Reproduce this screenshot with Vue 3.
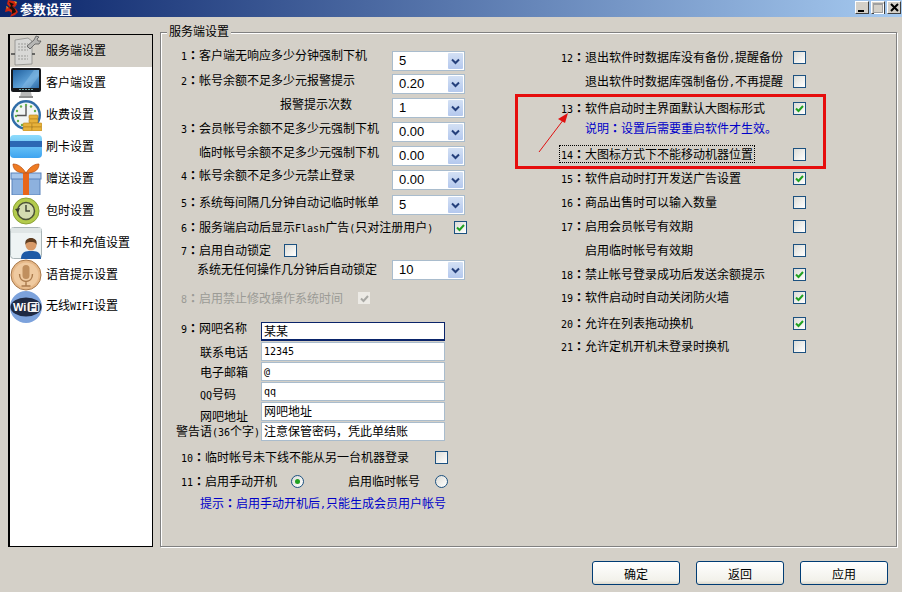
<template>
  <div class="window">
    <div class="titlebar">
      <svg class="logo" width="13" height="17" viewBox="0 0 13 17">
        <path d="M3 0l6 1 3 3-2 3-3-1 4 3 2 3-3 3-5 2 2-4-3-2-4 1 1-4 4-1-3-3z" fill="#d0240e" />
        <path d="M4 2l5 2-2 2 3 3 1 3-4 2 0-4-3-2 2-2z" fill="#1a0f08" />
        <path d="M1 6l2 1-1 2zM9 1l3 1-1 2z" fill="#f0a020" />
      </svg>
      <span class="title">参数设置</span>
      <div class="win-btns">
        <button class="win-btn"><i class="min"></i></button>
        <button class="win-btn off"><i class="max"></i></button>
        <button class="win-btn close">
          <svg width="9" height="9" viewBox="0 0 9 9"><path d="M1 1l7 7M8 1l-7 7" stroke="#000" stroke-width="2" /></svg>
        </button>
      </div>
    </div>

    <div class="main">
      <ul class="side">
        <li v-for="(item, i) in menu" :key="item.key" :class="['side-item', { active: i === 0 }]">
          <span class="side-icon">
            <svg v-if="item.key === 'server'" width="32" height="32" viewBox="0 0 32 32">
              <path d="M5 5l13-2 4 3v23l-17 1z" fill="#d8d8d6" stroke="#8b8b88" stroke-width=".8" />
              <path d="M8 9h10M8 12h10M8 15h10M8 21h10M8 24h10" stroke="#9b9b98" stroke-dasharray="2 1" />
              <path d="M1 19h4M22 19h3" stroke="#444" stroke-width="1.5" />
              <path d="M17 11l7-6 2-4 3 1-2 2 1 2 3 0-2 3-4 0-5 5z" fill="#b6b6b4" stroke="#555" stroke-width=".8" />
            </svg>
            <svg v-else-if="item.key === 'client'" width="32" height="32" viewBox="0 0 32 32">
              <defs>
                <linearGradient id="scr" x1="0" y1="0" x2="1" y2="1">
                  <stop offset="0" stop-color="#1f5f9e" />
                  <stop offset=".6" stop-color="#5fa2d8" />
                  <stop offset="1" stop-color="#2f6ba6" />
                </linearGradient>
              </defs>
              <path d="M11 25h10l1 5H10z" fill="#b9b9b9" />
              <rect x="9" y="29" width="14" height="2" fill="#8e8e8e" />
              <rect x="1" y="1" width="30" height="24" rx="2" fill="#16181c" />
              <rect x="3" y="3" width="26" height="18" fill="url(#scr)" />
              <path d="M11 21L24 3h5v6L20 21z" fill="#8fc0e6" opacity=".45" />
              <path d="M9 22.500h14" stroke="#7aa" stroke-dasharray="2 1" />
            </svg>
            <svg v-else-if="item.key === 'fee'" width="32" height="32" viewBox="0 0 32 32">
              <circle cx="16" cy="16" r="15" fill="#2f6da8" />
              <circle cx="16" cy="16" r="12.500" fill="#f2f6f6" />
              <g fill="#63b04a">
                <circle cx="16" cy="6" r="1.200" /><circle cx="21" cy="7.500" r="1.200" /><circle cx="25" cy="12" r="1.200" />
                <circle cx="26" cy="17" r="1.200" /><circle cx="11" cy="7.500" r="1.200" /><circle cx="7" cy="12" r="1.200" />
                <circle cx="6" cy="17" r="1.200" /><circle cx="8" cy="22" r="1.200" /><circle cx="12" cy="26" r="1.200" />
              </g>
              <path d="M16 7v9.500H7" stroke="#555" stroke-width="1.400" fill="none" />
              <g fill="#e6b23c" stroke="#b57f18" stroke-width=".6">
                <rect x="19" y="16" width="9" height="4" rx="1" /><rect x="19" y="20" width="9" height="4" rx="1" />
                <rect x="13" y="24" width="9" height="4" rx="1" /><rect x="13" y="28" width="9" height="4" rx="1" />
                <rect x="22" y="24" width="10" height="4" rx="1" /><rect x="22" y="28" width="10" height="4" rx="1" />
              </g>
            </svg>
            <svg v-else-if="item.key === 'card'" width="32" height="32" viewBox="0 0 32 32">
              <defs>
                <linearGradient id="crd" x1="0" y1="0" x2="0" y2="1">
                  <stop offset="0" stop-color="#8fdcfb" />
                  <stop offset="1" stop-color="#3ea4f0" />
                </linearGradient>
              </defs>
              <rect x="0" y="4" width="32" height="23" rx="4" fill="url(#crd)" />
              <rect x="0" y="10" width="32" height="6" fill="#2c68b4" />
            </svg>
            <svg v-else-if="item.key === 'gift'" width="32" height="32" viewBox="0 0 32 32">
              <rect x="2" y="14" width="28" height="18" fill="#8db1de" stroke="#5a83bb" />
              <rect x="1" y="10" width="30" height="6" fill="#a8c6ea" stroke="#5a83bb" />
              <rect x="13" y="10" width="6" height="22" fill="#e8661a" />
              <path d="M16 10C11 2 6 1 3 1c0 5 3 9 13 9zM16 10c5-8 10-9 13-9 0 5-3 9-13 9z" fill="#ee7b22" stroke="#b84c10" stroke-width=".7" />
            </svg>
            <svg v-else-if="item.key === 'time'" width="32" height="32" viewBox="0 0 32 32">
              <circle cx="16" cy="16" r="13" fill="#b3cb4c" stroke="#8da336" />
              <circle cx="16" cy="16" r="8.500" fill="#d4dcb0" stroke="#4c5236" stroke-width="1.500" />
              <path d="M16 10v6h4" stroke="#3c4030" stroke-width="1.400" fill="none" />
              <path d="M5 14l5-1-2 5z" fill="#3c4030" />
            </svg>
            <svg v-else-if="item.key === 'open'" width="32" height="32" viewBox="0 0 32 32">
              <rect x=".5" y=".5" width="31" height="31" rx="3" fill="#eef4f4" stroke="#a9b4b6" />
              <rect x="1" y="1" width="30" height="5" fill="#dfe6e6" />
              <path d="M11 32c0-6 3-8 10-8s10 2 10 8z" fill="#1d5aa6" />
              <circle cx="21" cy="18" r="5.500" fill="#d79a68" />
              <path d="M15.500 18c-1-5 2-7 5.500-7s6.500 2 5.500 7c-1-3-3-3-5.500-3s-4.500 0-5.500 3z" fill="#5e3d20" />
            </svg>
            <svg v-else-if="item.key === 'voice'" width="32" height="32" viewBox="0 0 32 32">
              <circle cx="16" cy="16" r="15" fill="#e6b888" stroke="#a97a4c" />
              <circle cx="16" cy="16" r="12.500" fill="#efcaa0" />
              <rect x="12.500" y="6" width="7" height="14" rx="3.500" fill="#c08f5e" />
              <path d="M9.500 15c0 5 3 7.500 6.500 7.500s6.500-2.500 6.500-7.500M16 22.500V27M11.500 27h9" stroke="#a97a4c" stroke-width="1.400" fill="none" />
            </svg>
            <svg v-else width="32" height="32" viewBox="0 0 32 32">
              <circle cx="16" cy="16" r="16" fill="#7ca2dc" />
              <ellipse cx="16" cy="16" rx="15.500" ry="9.500" fill="#1f2a44" />
              <rect x="17.500" y="11" width="12" height="10" rx="2" fill="#f4f4f4" />
              <text x="3" y="20" class="wifi-w">Wi</text>
              <text x="19" y="20" class="wifi-f">Fi</text>
            </svg>
          </span>
          <span class="side-text">{{ item.before }}<span v-if="item.latin" class="lat">{{ item.latin }}</span>{{ item.after }}</span>
        </li>
      </ul>

      <div class="group">
        <span class="legend">服务端设置</span>
        <div class="cols">
          <div class="left">
            <div v-for="row in moneyRows" :key="row.text" class="row" :style="{ height: row.h + 'px' }">
              <span class="label" :style="{ marginTop: row.dy + 'px' }">
                <span :class="{ indent: !row.n, indent2: row.far }"><span v-if="row.n" class="lat">{{ row.n }}</span><span v-if="row.n" class="colon">：</span>{{ row.text }}</span>
              </span>
              <div class="select">
                <span>{{ row.value }}</span>
                <span class="arrow">
                  <svg width="9" height="7" viewBox="0 0 9 7"><path d="M1 1.500l3.500 3.500L8 1.500" stroke="#25407c" stroke-width="2" fill="none" /></svg>
                </span>
              </div>
            </div>

            <div class="row flash">
              <span class="label"><span class="lat">6</span><span class="colon">：</span>服务端启动后显示<span class="lat">Flash</span>广告<span class="lat">(</span>只对注册用户<span class="lat">)</span></span>
              <span class="check on flash-check"><svg width="9" height="9" viewBox="0 0 9 9"><path d="M1 4.500l2.500 2.500L8 2" stroke="#21a121" stroke-width="2" fill="none" /></svg></span>
            </div>

            <div class="row lock">
              <span class="label"><span class="lat">7</span><span class="colon">：</span>启用自动锁定</span>
              <span class="check lock-check"></span>
            </div>
            <div class="row lock-time">
              <span class="label indent-lock">系统无任何操作几分钟后自动锁定</span>
              <div class="select">
                <span>10</span>
                <span class="arrow">
                  <svg width="9" height="7" viewBox="0 0 9 7"><path d="M1 1.500l3.500 3.500L8 1.500" stroke="#25407c" stroke-width="2" fill="none" /></svg>
                </span>
              </div>
            </div>

            <div class="row disabled-row">
              <span class="label gray"><span class="lat">8</span><span class="colon">：</span>启用禁止修改操作系统时间</span>
              <span class="check disabled"><svg width="9" height="9" viewBox="0 0 9 9"><path d="M1 4.500l2.500 2.500L8 2" stroke="#a8a8a4" stroke-width="2" fill="none" /></svg></span>
            </div>

            <div class="info">
              <div v-for="f in fields" :key="f.label" class="info-row">
                <span class="info-label" :style="{ marginTop: f.dy + 'px' }">
                  <template v-if="f.n"><span class="lat">{{ f.n }}</span><span class="colon">：</span>{{ f.label }}</template>
                  <span v-else-if="f.wide" class="wide">警告语<span class="lat">(36</span>个字<span class="lat">)</span></span>
                  <span v-else class="indent-info"><span v-if="f.latin" class="lat">{{ f.latin }}</span>{{ f.label }}</span>
                </span>
                <span :class="['input', { focus: f.focus, mono: f.mono }]">{{ f.value }}</span>
              </div>
            </div>

            <div class="row row-10">
              <span class="label"><span class="lat">10</span><span class="colon">：</span>临时帐号未下线不能从另一台机器登录</span>
              <span class="check"></span>
            </div>
            <div class="row row-11">
              <span class="label label-11"><span class="lat">11</span><span class="colon">：</span>启用手动开机</span>
              <span class="radio on"><i></i></span>
              <span class="label label-temp">启用临时帐号</span>
              <span class="radio"></span>
            </div>
            <div class="hint">提示<span class="colon">：</span>启用手动开机后<span class="lat">,</span>只能生成会员用户帐号</div>
          </div>

          <div class="right">
            <div v-for="row in rightRows" :key="row.text" class="rrow" :style="{ marginTop: row.gap + 'px' }">
              <span :class="['rlabel', { focused: row.focus, note: row.note }]">
                <span v-if="row.n"><span class="lat">{{ row.n }}</span><span class="colon">：</span></span><span v-else class="rindent"></span><span v-if="row.note">说明<span class="colon">：</span></span>{{ row.text }}<template v-if="row.text2"><span class="lat">,</span>{{ row.text2 }}</template>
              </span>
              <span v-if="!row.note" :class="['check', { on: row.on }]">
                <svg v-if="row.on" width="9" height="9" viewBox="0 0 9 9"><path d="M1 4.500l2.500 2.500L8 2" stroke="#21a121" stroke-width="2" fill="none" /></svg>
              </span>
            </div>
          </div>
        </div>

        <!-- annotation drawn on top of the screenshot -->
        <div class="red-box"></div>
        <svg class="red-arrow" width="34" height="42" viewBox="0 0 34 42">
          <path d="M1 41L26 8" stroke="#e01010" stroke-width="1" />
          <path d="M30 2l-10 6 7 4z" fill="#e01010" />
        </svg>
      </div>
    </div>

    <div class="footer">
      <button class="btn">确定</button>
      <button class="btn">返回</button>
      <button class="btn">应用</button>
    </div>
  </div>
</template>

<script setup>
const menu = [
  { key: 'server', before: '服务端设置' },
  { key: 'client', before: '客户端设置' },
  { key: 'fee', before: '收费设置' },
  { key: 'card', before: '刷卡设置' },
  { key: 'gift', before: '赠送设置' },
  { key: 'time', before: '包时设置' },
  { key: 'open', before: '开卡和充值设置' },
  { key: 'voice', before: '语音提示设置' },
  { key: 'wifi', before: '无线', latin: 'WIFI', after: '设置' }
]

const moneyRows = [
  { n: '1', text: '客户端无响应多少分钟强制下机', value: '5', h: 23, dy: -3 },
  { n: '2', text: '帐号余额不足多少元报警提示', value: '0.20', h: 24, dy: -1 },
  { text: '报警提示次数', value: '1', h: 24, dy: -1, far: true },
  { n: '3', text: '会员帐号余额不足多少元强制下机', value: '0.00', h: 24, dy: -1 },
  { text: '临时帐号余额不足多少元强制下机', value: '0.00', h: 24, dy: -1 },
  { n: '4', text: '帐号余额不足多少元禁止登录', value: '0.00', h: 25, dy: -2 },
  { n: '5', text: '系统每间隔几分钟自动记临时帐单', value: '5', h: 20, dy: 0 }
]

const fields = [
  { n: '9', label: '网吧名称', value: '某某', focus: true, dy: -1 },
  { label: '联系电话', value: '12345', mono: true, dy: 3 },
  { label: '电子邮箱', value: '@', mono: true, dy: 3 },
  { latin: 'QQ', label: '号码', value: 'qq', mono: true, dy: 5 },
  { label: '网吧地址', value: '网吧地址', dy: 7 },
  { label: '警告语', wide: true, value: '注意保管密码，凭此单结账', dy: 2 }
]

const rightRows = [
  { n: '12', text: '退出软件时数据库没有备份', text2: '提醒备份', gap: -1 },
  { text: '退出软件时数据库强制备份', text2: '不再提醒', gap: 10 },
  { n: '13', text: '软件启动时主界面默认大图标形式', on: true, gap: 13 },
  { text: '设置后需要重启软件才生效。', note: true, gap: 6 },
  { n: '14', text: '大图标方式下不能移动机器位置', focus: true, gap: 12 },
  { n: '15', text: '软件启动时打开发送广告设置', on: true, gap: 10 },
  { n: '16', text: '商品出售时可以输入数量', gap: 10 },
  { n: '17', text: '启用会员帐号有效期', gap: 10 },
  { text: '启用临时帐号有效期', gap: 10 },
  { n: '18', text: '禁止帐号登录成功后发送余额提示', on: true, gap: 10 },
  { n: '19', text: '软件启动时自动关闭防火墙', on: true, gap: 9 },
  { n: '20', text: '允许在列表拖动换机', on: true, gap: 12 },
  { n: '21', text: '允许定机开机未登录时换机', gap: 9 }
]
</script>

<style>
html,
body {
  margin: 0;
  background: #d4d0c8;
}
</style>

<style scoped>
.window {
  width: 902px;
  height: 592px;
  background: #d4d0c8;
  display: flex;
  flex-direction: column;
  overflow: hidden;
  font-family: "Noto Sans CJK SC", "Noto Sans", sans-serif;
  font-size: 12px;
  line-height: 14px;
  color: #000;
}

.titlebar {
  height: 17px;
  flex: none;
  display: flex;
  align-items: center;
  padding: 0 1px 0 5px;
  background: linear-gradient(to right, #0a246a, #a6caf0);
}

.logo {
  margin-right: 2px;
}

.title {
  color: #fff;
  font-weight: 700;
  font-size: 13px;
}

.win-btns {
  margin-left: auto;
  display: flex;
  gap: 2px;
  margin-top: -2px;
}

.win-btn {
  width: 14px;
  height: 13px;
  padding: 0;
  background: #d4d0c8;
  border: 1px solid;
  border-color: #fff #404040 #404040 #fff;
  display: flex;
  align-items: center;
  justify-content: center;
}

.win-btn .min {
  width: 6px;
  height: 2px;
  background: #000;
  margin-top: 6px;
  margin-right: 2px;
}

.win-btn .max {
  width: 8px;
  height: 7px;
  border: 1px solid #a0a0a0;
  border-top-width: 2px;
  box-shadow: 1px 1px 0 #fff;
}

.main {
  height: 514px;
  flex: none;
  display: flex;
  gap: 7px;
  padding: 15px 5px 0 8px;
  box-sizing: content-box;
}

.side {
  list-style: none;
  margin: 2px 0 0;
  padding: 0;
  width: 145px;
  height: 513px;
  box-sizing: border-box;
  background: #fff;
  border: 1px solid #000;
  border-left-width: 2px;
}

.side-item {
  height: 32px;
  display: flex;
  align-items: center;
}

.side-item.active {
  background: #d4d0c8;
}

.side-icon {
  width: 32px;
  height: 32px;
  flex: none;
  margin: 0 4px 0 0;
}

.side-icon svg {
  display: block;
}

.side-text {
  margin-top: -3px;
  white-space: nowrap;
}

.lat {
  font-family: "DejaVu Sans Mono", monospace;
  font-size: 10px;
}

.colon {
  font-family: "Noto Sans CJK TC", sans-serif;
  font-weight: 700;
}

.wifi-w,
.wifi-f {
  font-family: "Liberation Sans", sans-serif;
  font-weight: 700;
  font-size: 11px;
}

.wifi-w {
  fill: #fff;
}

.wifi-f {
  fill: #1f2a44;
}

.group {
  position: relative;
  width: 737px;
  height: 515px;
  box-sizing: border-box;
  border: 1px solid #808080;
  box-shadow: inset 1px 1px 0 #fff, 1px 1px 0 #fff;
  padding: 18px 0 0 20px;
}

.legend {
  position: absolute;
  left: 6px;
  top: -9px;
  padding: 0 2px;
  background: #d4d0c8;
}

.cols {
  display: flex;
}

.left {
  width: 290px;
  flex: none;
}

.row {
  display: flex;
  align-items: flex-start;
  height: 24px;
  white-space: nowrap;
}

.label {
  flex: none;
}

.row .select {
  margin-left: auto;
  margin-right: 6px;
}

.indent {
  padding-left: 18px;
}

.indent2 {
  padding-left: 99px;
}

.select {
  width: 73px;
  height: 20px;
  box-sizing: border-box;
  border: 1px solid #a9bccd;
  background: #fff;
  display: flex;
  align-items: center;
  justify-content: space-between;
  padding: 0 1px 0 6px;
  font-family: "Liberation Sans", sans-serif;
  font-size: 13px;
  flex: none;
}

.arrow {
  width: 15px;
  height: 16px;
  background: linear-gradient(#d3e0f4, #b4c8ee);
  display: flex;
  align-items: center;
  justify-content: center;
  border-radius: 1px;
}

.check {
  width: 13px;
  height: 13px;
  margin-top: 1px;
  box-sizing: border-box;
  flex: none;
  border: 1px solid #1c5180;
  background: linear-gradient(135deg, #dcdcd7, #fff);
  display: flex;
  align-items: center;
  justify-content: center;
}

.check.disabled {
  width: 12px;
  height: 12px;
  border: none;
  background: #eceae5;
}

.flash {
  height: 24px;
  padding-top: 5px;
  box-sizing: border-box;
}

.flash-check {
  margin-left: 21px;
}

.lock {
  height: 21px;
  padding-top: 4px;
  box-sizing: border-box;
}

.lock-check {
  margin-left: 13px;
}

.lock-time {
  height: 20px;
}

.indent-lock {
  padding-left: 16px;
  margin-top: 2px;
}

.disabled-row {
  height: 20px;
  margin-top: 8px;
  padding-top: 3px;
  box-sizing: border-box;
}

.gray {
  color: #9b9b96;
}

.disabled-row .check {
  margin-left: 15px;
}

.info {
  margin-top: 14px;
  display: flex;
  flex-direction: column;
  gap: 1px;
}

.info-row {
  display: flex;
  height: 19px;
  align-items: flex-start;
}

.info-label {
  width: 80px;
  flex: none;
  white-space: nowrap;
}

.indent-info {
  padding-left: 19px;
}

.wide {
  margin-left: -5px;
  white-space: nowrap;
}

.input {
  width: 184px;
  height: 19px;
  box-sizing: border-box;
  border: 1px solid #a9bccd;
  background: #fff;
  padding: 1px 2px;
  white-space: nowrap;
}

.input.focus {
  border: 1px solid #0a246a;
  box-shadow: inset 0 -1px 0 #0a246a;
}

.input.mono {
  font-family: "DejaVu Sans Mono", monospace;
  font-size: 10px;
  line-height: 16px;
}

.row-10 {
  height: 24px;
  margin-top: 9px;
}

.row-10 .check {
  margin-left: 26px;
}

.row-11 {
  height: 22px;
}

.label-11 {
  width: 110px;
}

.radio {
  width: 13px;
  height: 13px;
  margin-top: 1px;
  box-sizing: border-box;
  border: 1px solid #1c5180;
  border-radius: 50%;
  background: linear-gradient(135deg, #dcdcd7, #fff);
  display: flex;
  align-items: center;
  justify-content: center;
  flex: none;
}

.radio i {
  width: 5px;
  height: 5px;
  border-radius: 50%;
  background: #21a121;
}

.label-temp {
  margin-left: 44px;
  margin-right: 15px;
}

.hint {
  color: #0000c8;
  padding-left: 19px;
  white-space: nowrap;
}

.right {
  margin-left: 90px;
  width: 245px;
}

.rrow {
  height: 14px;
  display: flex;
  justify-content: space-between;
  white-space: nowrap;
}

.rindent {
  display: inline-block;
  width: 24px;
}

.rlabel.note {
  color: #0000c8;
}

.rlabel.focused {
  outline: 1px dotted #000;
  outline-offset: 1px;
}

.red-box {
  position: absolute;
  left: 354px;
  top: 61px;
  width: 311px;
  height: 75px;
  box-sizing: border-box;
  border: 3px solid #e60d0d;
}

.red-arrow {
  position: absolute;
  left: 377px;
  top: 78px;
}

.footer {
  flex: 1;
  display: flex;
  justify-content: flex-end;
  gap: 16px;
  padding: 15px 14px 0 0;
}

.btn {
  width: 88px;
  height: 24px;
  padding: 0;
  font-family: inherit;
  font-size: 12px;
  color: #000;
  border: 1px solid #003c74;
  border-radius: 3px;
  background: linear-gradient(#fff, #f2f1ea 85%, #dcd8cc);
}
</style>
